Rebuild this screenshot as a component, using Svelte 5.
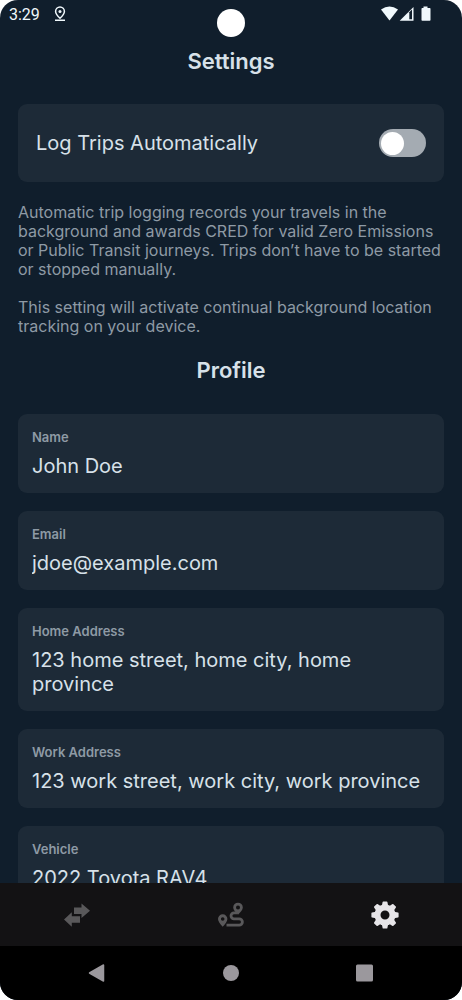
<script>
  let logTrips = false;

  let fields = [
    { id: "name", label: "Name", value: "John Doe" },
    { id: "email", label: "Email", value: "jdoe@example.com" },
    {
      id: "home",
      label: "Home Address",
      value: "123 home street, home city, home province",
    },
    {
      id: "work",
      label: "Work Address",
      value: "123 work street, work city, work province",
    },
    { id: "vehicle", label: "Vehicle", value: "2022 Toyota RAV4" },
  ];
</script>

<div class="phone">
  <header class="status">
    <span class="time">3:29</span>
    <svg class="pin" width="12" height="16" viewBox="0 0 12 16">
      <path
        d="M6 12.2C3.2 9.6 1.6 7.6 1.6 5.4a4.4 4.4 0 0 1 8.8 0c0 2.2-1.6 4.2-4.4 6.8z"
        fill="none"
        stroke="currentColor"
        stroke-width="1.5"
      />
      <circle cx="6" cy="5.4" r="1.5" fill="currentColor" />
      <path d="M1 14.2h10" stroke="currentColor" stroke-width="1.5" />
    </svg>
    <span class="camera"></span>
    <svg class="signals" width="50" height="16" viewBox="0 0 50 16">
      <path d="M0 3.5Q8.5-2.5 17 3.5L8.5 14.5z" fill="currentColor" />
      <path d="M32.5 1v13.800H18.700z" fill="currentColor" />
      <path d="M28.300 6.200l2.700-2.600v9.700h-2.700z" fill="#101e2c" />
      <path
        d="M42.500.500h4v1.500h2.200q.8 0 .8.800v11.200q0 .8-.8.800h-7.400q-.8 0-.8-.8V2.800q0-.8.8-.8h1.200z"
        fill="currentColor"
      />
    </svg>
  </header>

  <main>
    <h1>Settings</h1>

    <label class="card toggle">
      <span>Log Trips Automatically</span>
      <input type="checkbox" role="switch" bind:checked={logTrips} />
    </label>

    <p>
      Automatic trip logging records your travels in the background and awards
      CRED for valid Zero Emissions or Public Transit journeys. Trips don’t have
      to be started or stopped manually.
    </p>
    <p>
      This setting will activate continual background location tracking on your
      device.
    </p>

    <h2>Profile</h2>

    <div class="fields">
      {#each fields as field}
        <div class="card field">
          <label for={field.id}>{field.label}</label>
          <textarea id={field.id} rows="1" bind:value={field.value}></textarea>
        </div>
      {/each}
    </div>
  </main>

  <nav class="tabs">
    <button aria-label="Transactions">
      <svg width="28" height="28" viewBox="0 0 28 28">
        <path d="M11 6.500h7.500V2.500l8.500 7.200-8.500 7.200V13H11z" fill="currentColor" />
        <path d="M17 15.300H8.800v-4L1 18.500l7.800 7.200v-4H17z" fill="currentColor" />
      </svg>
    </button>
    <button aria-label="Trips">
      <svg width="28" height="28" viewBox="0 0 28 28">
        <path
          d="M9.500 24.200h12.700a3.200 3.200 0 0 0 0-6.400h-5.200a3 3 0 0 1 0-6h3"
          fill="none"
          stroke="currentColor"
          stroke-width="2.800"
        />
        <path
          fill="currentColor"
          fill-rule="evenodd"
          d="M5.700 25.800C3.200 22.800 1 20.300 1 18a4.700 4.700 0 0 1 9.400 0c0 2.300-2.200 4.800-4.700 7.800zM5.700 19.800a1.800 1.800 0 1 0 0-3.600 1.800 1.800 0 0 0 0 3.600z"
        />
        <path
          fill="currentColor"
          fill-rule="evenodd"
          d="M21 13.800C18.400 10.800 16.200 8.800 16.200 6.500a4.800 4.800 0 0 1 9.600 0c0 2.300-2.200 4.300-4.800 7.300zM21 8.500a2 2 0 1 0 0-4 2 2 0 0 0 0 4z"
        />
      </svg>
    </button>
    <button class="active" aria-label="Settings">
      <svg width="28" height="28" viewBox="0 0 28 28">
        <circle
          cx="14"
          cy="14"
          r="7.500"
          fill="none"
          stroke="currentColor"
          stroke-width="6"
        />
        {#each [0, 45, 90, 135, 180, 225, 270, 315] as angle}
          <path
            d="M10.800 5l.8-4q.1-.6.7-.6h3.400q.6 0 .7.600l.8 4z"
            fill="currentColor"
            transform="rotate({angle} 14 14)"
          />
        {/each}
      </svg>
    </button>
  </nav>

  <footer class="system">
    <button aria-label="Back">
      <svg width="18" height="18" viewBox="0 0 18 18">
        <path
          d="M1.500 9L15.500 1v16z"
          fill="currentColor"
          stroke="currentColor"
          stroke-width="1.5"
          stroke-linejoin="round"
        />
      </svg>
    </button>
    <button aria-label="Home">
      <svg width="18" height="18" viewBox="0 0 18 18">
        <circle cx="9" cy="9" r="8" fill="currentColor" />
      </svg>
    </button>
    <button aria-label="Overview">
      <svg width="18" height="18" viewBox="0 0 18 18">
        <rect x="0" y=".5" width="17" height="17" rx="1.5" fill="currentColor" />
      </svg>
    </button>
  </footer>
</div>

<style>
  :global(body) {
    background: #fff;
  }

  .phone {
    display: flex;
    flex-direction: column;
    height: 100vh;
    overflow: hidden;
    border-radius: 18px;
    background: #101e2c;
    color: #d7e1e9;
    font-family: Inter, "Liberation Sans", sans-serif;
  }

  .status {
    position: relative;
    display: flex;
    align-items: center;
    height: 28px;
    flex-shrink: 0;
    padding: 0 31px 0 9px;
    color: #f0f8fc;
  }

  .time {
    font: 16px Roboto, sans-serif;
  }

  .pin {
    margin-left: 14px;
  }

  .signals {
    margin-left: auto;
  }

  .camera {
    position: absolute;
    top: 9px;
    left: 50%;
    width: 28px;
    height: 28px;
    margin-left: -14px;
    border-radius: 50%;
    background: #fff;
  }

  main {
    flex: 1;
    min-height: 0;
    overflow-y: auto;
    scrollbar-width: none;
    padding: 18px 18px 0;
  }

  h1,
  h2 {
    margin: 0;
    font-size: 22px;
    line-height: 30px;
    font-weight: 600;
    font-optical-sizing: none;
    text-align: center;
  }

  .card {
    border-radius: 9px;
    background: #1d2a37;
  }

  .toggle {
    display: flex;
    align-items: center;
    justify-content: space-between;
    height: 78px;
    margin: 28px 0 21px;
    padding: 0 18px;
    font-size: 20px;
  }

  .toggle input {
    appearance: none;
    display: flex;
    align-items: center;
    width: 47px;
    height: 28px;
    margin: 0;
    padding: 0 2px;
    border-radius: 14px;
    background: #a4abb2;
  }

  .toggle input::before {
    content: "";
    width: 23px;
    height: 23px;
    border-radius: 50%;
    background: #fff;
  }

  .toggle input:checked {
    justify-content: flex-end;
    background: #4caf7a;
  }

  p {
    margin: 0 0 19px;
    font-size: 16px;
    line-height: 19px;
    color: #8e9aa5;
  }

  h2 {
    margin-bottom: 29px;
  }

  .fields {
    display: flex;
    flex-direction: column;
    gap: 18px;
    padding-bottom: 18px;
  }

  .field {
    display: flex;
    flex-direction: column;
    gap: 8px;
    padding: 14px 14px 15px;
  }

  .field label {
    font-size: 13px;
    line-height: 18px;
    font-weight: 600;
    color: #8e9aa5;
  }

  textarea {
    field-sizing: content;
    width: 100%;
    margin: 0;
    padding: 0;
    border: 0;
    outline: 0;
    resize: none;
    overflow: hidden;
    background: none;
    color: inherit;
    font: inherit;
    font-size: 20px;
    line-height: 24px;
  }

  button {
    display: flex;
    align-items: center;
    justify-content: center;
    padding: 0;
    border: 0;
    background: none;
    color: inherit;
  }

  .tabs {
    display: grid;
    grid-template-columns: repeat(3, 1fr);
    flex-shrink: 0;
    height: 63px;
    background: #131214;
    color: #59585a;
  }

  .tabs .active {
    color: #e6e4e8;
  }

  .system {
    display: flex;
    justify-content: space-between;
    flex-shrink: 0;
    height: 54px;
    padding: 0 19%;
    background: #000;
    color: #9b989d;
  }
</style>
